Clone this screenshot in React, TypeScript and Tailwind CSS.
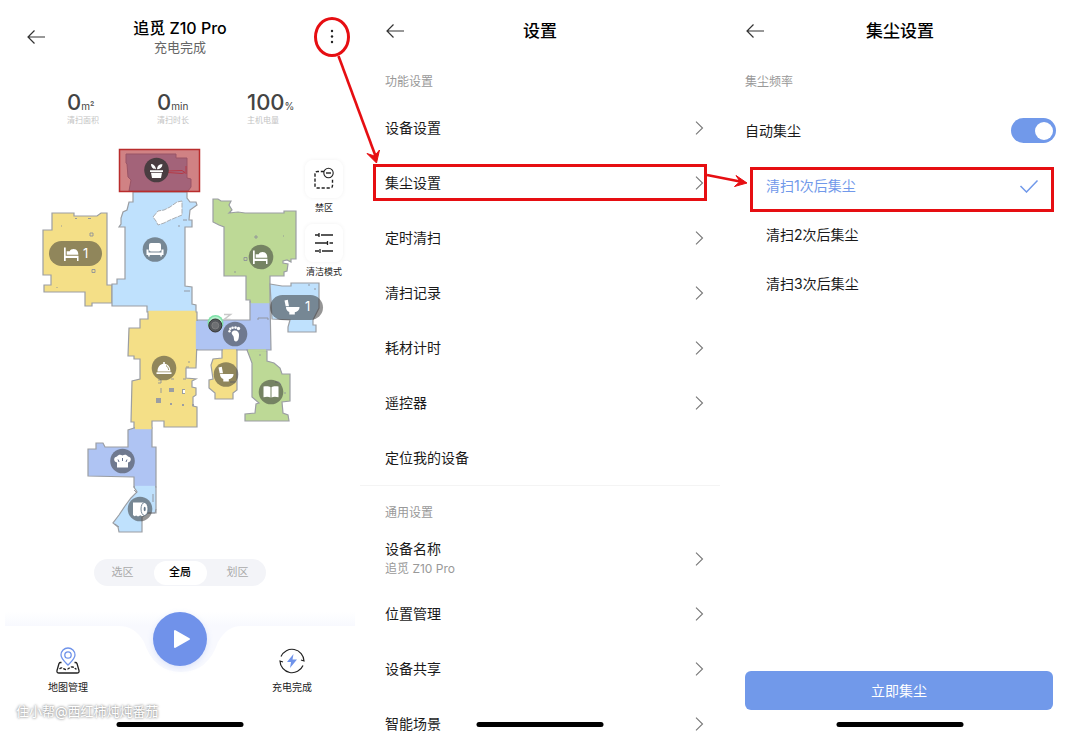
import React, { useState } from 'react';

interface MenuRowProps {
  label: string;
  note?: string;
  arrow?: boolean;
  marked?: boolean;
}

interface PanelHeaderProps {
  title: string;
}

interface Room {
  fill: string;
  points: string;
}

const rooms: Room[] = [
  { fill: '#f4df87', points: '52,213 74,213 74,216 97,216 101,213 107,213 107,285 112,285 112,303 92,303 92,306 85,306 85,292 44,292 44,285 51,285 51,275 43,275 43,230 52,230' },
  { fill: '#bfe1fd', points: '133,192 133,202 129,202 127,210 123,212 121,218 121,224 119,227 125,227 125,279 117,279 117,284 112,284 112,306 147,306 147,312 196,312 196,305 192,304 192,287 185,286 185,227 192,227 192,220 189,220 190,210 197,205 196,202 190,202 187,198 187,192' },
  { fill: '#bdd996', points: '213,199 218,199 221,201 231,201 229,205 232,210 229,213 238,212 245,213 284,213 284,211 296,211 296,259 291,259 291,262 287,260 283,261 283,263 288,264 287,271 284,272 284,276 270,276 270,302 250,302 250,300 246,300 246,276 224,276 224,227 219,225 213,222' },
  { fill: '#bfe1fd', points: '270,284 282,286 291,286 291,283 319,283 319,308 313,320 313,325 316,325 316,332 288,332 288,327 290,320 272,319' },
  { fill: '#afc4f3', points: '250,302 270,302 271,350 197,350 197,320 250,320' },
  { fill: '#f4df87', points: '148,312 148,319 140,319 140,328 129,328 128,356 134,356 134,359 140,359 140,379 132,381 131,422 134,422 134,428 152,428 152,421 164,421 164,427 197,427 197,407 193,406 193,397 196,395 196,388 192,387 192,381 196,379 186,378 186,368 196,368 197,340 197,312' },
  { fill: '#f4df87', points: '222,350 237,350 237,390 233,393 233,399 215,399 215,393 209,388 209,380 213,379 211,365 213,359 222,358' },
  { fill: '#bdd996', points: '247,350 267,351 267,361 274,363 280,368 282,374 290,374 290,401 282,402 283,413 288,415 289,421 245,421 245,414 255,413 256,404 259,403 252,397 252,363' },
  { fill: '#afc4f3', points: '134,428 152,428 152,447 156,447 156,487 134,487 134,477 88,476 88,449 96,449 96,443 103,443 105,447 128,447 128,430' },
  { fill: '#bfe1fd', points: '134,487 156,487 156,513 148,513 142,517 142,532 119,532 118,527 113,523 119,515 125,506 131,498 137,492' },
];

const PanelHeader: React.FC<PanelHeaderProps> = ({ title }) => {
  return (
    <header className="grid h-[62px] grid-cols-[1fr_auto_1fr] items-center px-6">
      <BackButton />
      <h2 className="text-[17px] leading-6 font-medium text-black">{title}</h2>
    </header>
  );
};

const BackButton: React.FC = () => {
  return (
    <button type="button" aria-label="返回" className="flex h-6 w-6 items-center">
      <svg viewBox="0 0 22 18" className="h-[18px] w-[22px]" fill="none" stroke="#333" strokeWidth="1.2">
        <path d="M20 9H3M9.500 2.500L3 9l6.500 6.500" />
      </svg>
    </button>
  );
};

const HomeBar: React.FC = () => {
  return <div className="absolute bottom-[10px] left-1/2 h-[5px] w-[127px] -translate-x-1/2 rounded-full bg-black" />;
};

const MenuRow: React.FC<MenuRowProps> = ({ label, note, arrow = true, marked }) => {
  return (
    <li className="relative">
      <button type="button" className="flex h-[55px] w-full items-center justify-between pr-4 pl-[25px] text-left">
        <span className="flex flex-col">
          <span className="text-[14px] leading-5 text-[#1a1a1a]">{label}</span>
          {note && <span className="text-[12px] leading-5 text-[#999]">{note}</span>}
        </span>
        {arrow && (
          <svg viewBox="0 0 9 14" className="h-[14px] w-[9px]" fill="none" stroke="#777" strokeWidth="1.1">
            <path d="M1 .7L7.500 7L1 13.300" />
          </svg>
        )}
      </button>
      {marked && <div className="pointer-events-none absolute inset-x-[13px] top-[9px] h-[37px] border-3 border-[#e60e12]" />}
    </li>
  );
};

const BedIcon: React.FC = () => {
  return (
    <g fill="#fff">
      <path d="M-8-6.500h1.700V1.800H6.500V7H5V4H-6.300V7H-8z" />
      <path d="M-5.300.8v-3.500h3c1-3 6.500-3.300 8 .2.500 1 .6 2 .6 3.300z" />
    </g>
  );
};

const ToiletIcon: React.FC = () => {
  return (
    <g fill="#fff">
      <path d="M-7.500-6.500l3.300-.8L-3-.7h-3.300z" />
      <path d="M-6 0H7.500C7.500 3.300 5 5 2.800 5.300V7.500h-5.500V5C-5 4-6 2.500-6 0z" />
    </g>
  );
};

const HomeMap: React.FC = () => {
  return (
    <svg viewBox="0 140 360 400" className="w-full" role="img" aria-label="地图">
      {rooms.map((room) => (
        <polygon key={room.points} points={room.points} fill={room.fill} stroke="#9b9ea3" strokeWidth="1.2" />
      ))}
      {/* doorways between the rooms */}
      <g strokeWidth="2.400">
        <path d="M148.500 312H195.500" stroke="#f4df87" />
        <path d="M197 321V349" stroke="#afc4f3" />
        <path d="M251 302H269.500" stroke="#bdd996" />
        <path d="M223 350.500H236" stroke="#f4df87" />
        <path d="M248 350.500H266" stroke="#bdd996" />
        <path d="M135 428H151.500" stroke="#f4df87" />
        <path d="M135 487H155" stroke="#bfe1fd" />
      </g>
      <polygon points="153,217 158,211 164,210 170,207 177,202 182,201 182,215 170,220 164,223 158,225 156,221" fill="#fff" stroke="#a9adb2" strokeWidth="1" strokeDasharray="5 1" />
      <g fill="none" stroke="#8f9298" strokeWidth=".9">
        <path d="M75 218.500h2M88 218.500h3M90 233h3v3h-3zM92 269.500h3v3h-3zM57 287v1M61 226h1M183 220h4M178 226h2M184 291h6" />
        <path d="M244 257.500h3v3h-3zM255 236h2v2h-2zM283 236h1M234 272h2M308 285h2M314 289h2M258 320v-2h10v2" />
        <path d="M158 380h3v3h-3M171 379h3M183 379h3M161 388v5M153 352M189 363v-2M186 367h3M259 355h2M275 382h4l2 3M284 393h2M230 382h6M153 494v8M148 513h7l1-4M137 493l-3-3M115 524l4 3" />
      </g>
      <g fill="#9b9ea3">
        <path d="M156 398h5v5h-5zM169 388h5v4h-5zM182 389h3v5h-3zM170 403h2v2h-2zM182 404h2v2h-2zM192 404h2v2h-2z" />
        <path d="M183 390h2v3h-2z" fill="#fff" />
      </g>

      {/* carpet zone */}
      <rect x="120" y="150" width="79" height="41" fill="#d08284" />
      <path d="M126 154h50v4h11v20l4 1v8l-3 4h-59l2-11-3-3-1-13-1-1z" fill="#a36379" stroke="#995466" />
      <path d="M168 171l14-.5 3 2-3 1-14-1M186 166v8" fill="none" stroke="#b63a46" />
      <rect x="119.500" y="149.500" width="80" height="42" fill="none" stroke="#b92c2c" strokeWidth="1.500" />

      {/* robot on its dock */}
      <circle cx="215.500" cy="323" r="8" fill="#7ee2a8" />
      <circle cx="215.500" cy="323" r="6.500" fill="#b9f2d0" />
      <circle cx="215.300" cy="325.500" r="6.500" fill="#55585c" stroke="#333" />
      <circle cx="215.300" cy="325.500" r="3.500" fill="#6d6f72" stroke="#888" strokeWidth=".7" />
      <path d="M224 314.500h6.500l-6.500 5h6.500" fill="none" stroke="#c8c8c8" strokeWidth="1.500" />

      {/* room badges */}
      <g fill="#333" fillOpacity=".52">
        <circle cx="156.500" cy="170" r="12.300" fillOpacity=".8" />
        <circle cx="155" cy="249.500" r="12.300" />
        <circle cx="261" cy="257" r="12.300" />
        <circle cx="235" cy="334" r="12.300" />
        <circle cx="164" cy="368" r="12.300" />
        <circle cx="226" cy="374.500" r="12.300" />
        <circle cx="271" cy="392" r="12.300" />
        <circle cx="122.500" cy="461" r="12.300" />
        <circle cx="140" cy="509" r="12.300" />
        <rect x="49" y="241" width="53" height="25" rx="12.500" />
        <rect x="270" y="295" width="53" height="25" rx="12.500" />
      </g>

      <g fill="#fff">
        <g transform="translate(156.500 170)">
          <path d="M-6.500.2H6.500V2H-6.500zM-5.500 2.700H5.500L4.500 8H-4.500z" />
          <path d="M-.5-.8C-3-.8-5.500-2.500-5.500-6-3-6-.8-4-.5-.8zM.6-.8C.5-4 2.800-6 6-5.800 5.800-2.500 3.500-.8.6-.8z" />
        </g>
        <g transform="translate(155 249.500)">
          <rect x="-6" y="-6.500" width="12" height="8.500" rx="2" />
          <path d="M-8.500 0h2v3H6.500V0h2v5.500H6.800V7H5.300V5.500H-5.300V7h-1.500V5.500h-1.700z" />
        </g>
        <g transform="translate(235 334)">
          <path d="M-2-3C1-4.500 4-2.500 4 .5 4 3.500 3.500 7.500 1 7.500-1.500 7.500-.8 4.500-1.500 2.500-2.200.8-5-1-2-3z" />
          <circle cx="-5.500" cy="-2.800" r="1.200" />
          <circle cx="-4.700" cy="-5.200" r="1.200" />
          <circle cx="-2.400" cy="-6.300" r="1.300" />
          <circle cx=".5" cy="-6.400" r="1.300" />
          <circle cx="3.500" cy="-5.500" r="1.700" />
        </g>
        <g transform="translate(164 368)">
          <path d="M-6.500 3.500C-6.500-1.500-3.500-4-.8-4.300V-6H.8v1.700C3.500-4 6.500-1.500 6.500 3.500zM-7.500 4.300h15V6h-15z" />
          <path d="M2-2.500C3.500-1.500 4.500.3 4.700 2" fill="none" stroke="#8f8653" strokeWidth=".9" />
        </g>
        <g transform="translate(271 392)">
          <path d="M-7.500-5.500C-5-6-2-6-.5-4.800V5.500C-2 4.500-5 4.500-7.500 5.200zM7.500-5.500C5-6 2-6 .5-4.800V5.500C2 4.500 5 4.500 7.500 5.200z" />
        </g>
        <g transform="translate(122.500 461)">
          <path d="M-5.500 6.500V1.500C-9 1-9.500-4-5.500-4.500-4-7-1.500-6.500 0-5.500 1.500-6.500 4-7 5.500-4.500 9.500-4 9 1 5.500 1.500v5z" />
          <path d="M-4.500-1.500l1 2.500M0-3V0M4.500-1.500L3.500 1" fill="none" stroke="#65728f" />
        </g>
        <g transform="translate(140 509)">
          <path d="M-7-6.500H4V6.500l-2 .8-1.500-1L-2 7.500l-1.800-1L-5.500 7.300-7 6z" />
          <ellipse cx="4.500" cy="0" rx="3.500" ry="6.500" stroke="#65798a" strokeWidth=".9" />
          <ellipse cx="4.700" cy="0" rx="1" ry="2.300" fill="#65798a" />
        </g>
        <g transform="translate(261 257)"><BedIcon /></g>
        <g transform="translate(72 254)"><BedIcon /></g>
        <g transform="translate(226 374)"><ToiletIcon /></g>
        <g transform="translate(292 307)"><ToiletIcon /></g>
        <text x="83" y="258" fontSize="13">1</text>
        <text x="305" y="311" fontSize="13">1</text>
      </g>
    </svg>
  );
};

const stats = [
  { value: '0', unit: 'm²', label: '清扫面积' },
  { value: '0', unit: 'min', label: '清扫时长' },
  { value: '100', unit: '%', label: '主机电量' },
];

const modes = ['选区', '全局', '划区'];

const DevicePanel: React.FC = () => {
  const [mode, setMode] = useState('全局');

  return (
    <section className="relative">
      <header className="grid h-[74px] grid-cols-[1fr_auto_1fr] items-center px-4">
        <div className="pl-[9px]">
          <BackButton />
        </div>
        <div className="text-center">
          <h1 className="text-[16px] leading-5 font-medium text-black">追觅 Z10 Pro</h1>
          <p className="text-[13px] leading-[18px] text-[#666]">充电完成</p>
        </div>
        <button type="button" aria-label="更多" className="relative flex h-6 w-6 items-center justify-center justify-self-end">
          <svg viewBox="0 0 4 16" className="h-4 w-1" fill="#222">
            <circle cx="2" cy="2" r="1.200" />
            <circle cx="2" cy="7.500" r="1.200" />
            <circle cx="2" cy="13" r="1.200" />
          </svg>
          <span className="absolute -inset-x-[6px] -inset-y-2 rounded-[50%] border-3 border-[#e60e12]" />
        </button>
      </header>

      <dl className="grid grid-cols-3 pt-4 pr-[23px] pl-[67px]">
        {stats.map((stat) => (
          <div key={stat.label} className="flex flex-col-reverse">
            <dt className="text-[8px] leading-3 text-[#c4c4c4]">{stat.label}</dt>
            <dd className="h-6 text-[22px] leading-6 font-medium text-[#444]">
              {stat.value}
              <span className="text-[10px] leading-none font-normal">{stat.unit}</span>
            </dd>
          </div>
        ))}
      </dl>

      <div className="relative mt-[14px]">
        <HomeMap />
        <div className="absolute top-5 right-3 flex w-12 flex-col gap-[10px] text-center text-[9px] leading-3 text-[#222]">
          <button type="button" className="flex flex-col items-center gap-1 whitespace-nowrap">
            <span className="flex h-[38px] w-[38px] items-center justify-center rounded-lg bg-white shadow-[0_0_4px_#0000000f]">
              <svg viewBox="0 0 24 24" className="h-6 w-6" fill="none" stroke="#222" strokeWidth="1.400">
                <path d="M12 4.500H5.500Q3 4.500 3 7v11.500Q3 21 5.500 21h12.500Q20.500 21 20.500 18.500V12" strokeDasharray="3.200 1.800" />
                <circle cx="16.500" cy="6" r="4.700" strokeWidth="1.100" />
                <path d="M14 6h5" />
              </svg>
            </span>
            <span>禁区</span>
          </button>
          <button type="button" className="flex flex-col items-center gap-1 whitespace-nowrap">
            <span className="flex h-[38px] w-[38px] items-center justify-center rounded-lg bg-white shadow-[0_0_4px_#0000000f]">
              <svg viewBox="0 0 24 24" className="h-6 w-6" fill="none" stroke="#222" strokeWidth="1.300">
                <path d="M3 4h4M9 4h12M7 2v4M3 12h12.500M17.500 12H21M15.500 10v4M3 20h4M10 20h11M8 18v4" />
              </svg>
            </span>
            <span>清洁模式</span>
          </button>
        </div>
      </div>

      <div className="mx-auto mt-[19px] flex h-[27px] w-[172px] items-center justify-between rounded-full bg-[#f3f4f8] px-[2px] text-[11px]">
        {modes.map((item) => (
          <button
            key={item}
            type="button"
            onClick={() => setMode(item)}
            className={`h-6 w-[53px] rounded-full ${mode === item ? 'bg-white font-medium text-black' : 'text-[#aaa]'}`}
          >
            {item}
          </button>
        ))}
      </div>

      <nav className="relative mt-5 flex h-[90px] items-start justify-between px-9 text-[10px] leading-4 text-[#222]">
        <svg viewBox="0 0 350 80" className="absolute inset-x-[5px] top-0 w-[calc(100%-10px)]" fill="none">
          <defs>
            <linearGradient id="navShade" gradientUnits="userSpaceOnUse" x1="0" y1="6" x2="0" y2="20">
              <stop offset="0" stopColor="#fff" />
              <stop offset="1" stopColor="#f8f9fe" />
            </linearGradient>
          </defs>
          <path d="M0 6h350v14H236Q222 20 213 36Q203 66 176 66Q149 66 139 36Q130 20 114 20H0z" fill="url(#navShade)" />
        </svg>
        <button type="button" className="relative flex w-16 flex-col items-center gap-1 pt-[41px]">
          <svg viewBox="0 0 26 28" className="h-7 w-[26px]" fill="none" strokeWidth="1.300">
            <path d="M13 18C9 14 6 11.500 6 8a7 7 0 0 1 14 0c0 3.500-3 6-7 10z" stroke="#6f93ea" />
            <circle cx="13" cy="8" r="3.200" stroke="#6f93ea" />
            <path d="M6.500 15.500H5.500q-1 0-1.500 1L2 23.500Q1.500 26 4 26h18q2.500 0 2-2.500l-2-7q-.5-1-1.500-1h-1" stroke="#222" />
            <path d="M4.500 22c3-3 4 1 7 .5s3-3 6-2.500 2 2 4 2" stroke="#222" strokeDasharray="3 1.200" />
          </svg>
          地图管理
        </button>
        <button type="button" aria-label="开始清扫" className="relative mt-[6px] flex h-[54px] w-[54px] items-center justify-center rounded-full bg-[#7092ea] shadow-[0_2px_6px_#7092ea33]">
          <svg viewBox="0 0 18 20" className="ml-[3px] h-5 w-[18px]" fill="#fff" stroke="#fff" strokeWidth="2" strokeLinejoin="round">
            <path d="M2 2v16l14-8z" />
          </svg>
        </button>
        <button type="button" className="relative flex w-16 flex-col items-center gap-1 pt-[41px]">
          <svg viewBox="0 0 28 28" className="h-7 w-7" fill="none" stroke="#222" strokeWidth="1.200">
            <path d="M3 9.500A12 12 0 0 1 26 14l-3-1M25 18.500A12 12 0 0 1 2 14l3 1" />
            <path d="M15.500 7L9 15h4l-1 6 7-8.500h-4.500z" fill="#6f93ea" stroke="none" />
          </svg>
          充电完成
        </button>
      </nav>

      <p className="absolute bottom-4 left-4 text-[13px] leading-5 text-white [text-shadow:0_0_3px_#888,0_0_2px_#aaa]">
        住小帮@西红柿炖炖番茄
      </p>
      <HomeBar />
    </section>
  );
};

const SettingsPanel: React.FC = () => {
  return (
    <section className="relative">
      <PanelHeader title="设置" />
      <h3 className="flex h-[38px] items-center pt-[2px] pl-[25px] text-[12px] text-[#999]">功能设置</h3>
      <ul>
        <MenuRow label="设备设置" />
        <MenuRow label="集尘设置" marked />
        <MenuRow label="定时清扫" />
        <MenuRow label="清扫记录" />
        <MenuRow label="耗材计时" />
        <MenuRow label="遥控器" />
        <MenuRow label="定位我的设备" arrow={false} />
      </ul>
      <h3 className="flex h-[46px] items-center border-t border-[#f4f4f4] pt-2 pl-[25px] text-[12px] text-[#999]">通用设置</h3>
      <ul>
        <MenuRow label="设备名称" note="追觅 Z10 Pro" />
        <MenuRow label="位置管理" />
        <MenuRow label="设备共享" />
        <MenuRow label="智能场景" />
      </ul>
      <HomeBar />

      {/* arrows that link the three steps */}
      <svg viewBox="0 0 50 120" className="pointer-events-none absolute top-12 -left-6 h-[120px] w-[50px]" fill="none" stroke="#e60e12" strokeWidth="2.600">
        <path d="M2.500 8L39.500 108" />
        <path d="M40.500 115L31 105.500l7.500 2.500 5-6z" fill="#e60e12" strokeWidth="1" />
      </svg>
      <svg viewBox="0 0 50 30" className="pointer-events-none absolute top-[165px] -right-9 h-[30px] w-[50px]" fill="none" stroke="#e60e12" strokeWidth="2.600">
        <path d="M1 10L34 16.500" />
        <path d="M41 18L28.500 21.500l5.500-5-4-6z" fill="#e60e12" strokeWidth="1" />
      </svg>
    </section>
  );
};

const DustPanel: React.FC = () => {
  const [auto, setAuto] = useState(true);
  const [times, setTimes] = useState(1);

  return (
    <section className="relative flex flex-col">
      <PanelHeader title="集尘设置" />
      <h3 className="flex h-[38px] items-center pt-[2px] pl-[25px] text-[12px] text-[#999]">集尘频率</h3>
      <label className="relative flex h-[61px] items-center justify-between pr-6 pl-[25px] text-[14px] text-[#1a1a1a]">
        自动集尘
        <input type="checkbox" className="sr-only" checked={auto} onChange={() => setAuto(!auto)} />
        <span className={`flex h-[25px] w-[45px] items-center rounded-full px-[3px] ${auto ? 'justify-end bg-[#7199ea]' : 'bg-gray-300'}`}>
          <span className="h-[18px] w-[18px] rounded-full bg-white" />
        </span>
      </label>
      <fieldset>
        {[1, 2, 3].map((n) => (
          <label
            key={n}
            className={`relative flex h-[49px] items-center justify-between pr-[41px] pl-[46px] text-[14px] ${
              times === n ? 'text-[#7199ea]' : 'text-[#1a1a1a]'
            }`}
          >
            清扫{n}次后集尘
            <input type="radio" name="times" className="sr-only" checked={times === n} onChange={() => setTimes(n)} />
            {times === n && (
              <svg viewBox="0 0 20 14" className="h-[14px] w-5" fill="none" stroke="#7199ea" strokeWidth="1.500">
                <path d="M1.500 7L7.500 13L18.500 1.500" />
              </svg>
            )}
            {n === 1 && <span className="pointer-events-none absolute top-[6px] right-[26px] -bottom-[2px] left-[30px] border-3 border-[#e60e12]" />}
          </label>
        ))}
      </fieldset>
      <button type="button" className="mt-auto mr-[27px] mb-[27px] ml-[25px] h-[39px] rounded-md bg-[#7199ea] text-[14px] text-white">
        立即集尘
      </button>
      <HomeBar />
    </section>
  );
};

const App: React.FC = () => {
  return (
    <main className="grid h-screen grid-cols-3 grid-rows-[minmax(0,1fr)] overflow-hidden bg-white font-['Inter','Noto_Sans_CJK_SC',sans-serif]">
      <DevicePanel />
      <SettingsPanel />
      <DustPanel />
    </main>
  );
};

export default App;
